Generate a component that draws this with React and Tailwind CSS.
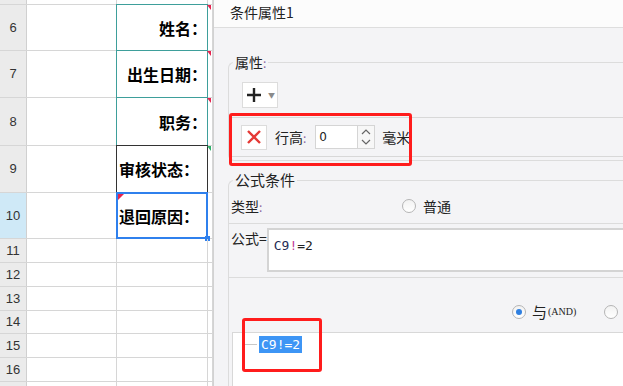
import React from 'react'

const rows = [
  { n: '', h: 'h-[5px]' },
  { n: '6', h: 'h-[46px]', label: '姓名：', align: 'right', frame: 'teal' },
  { n: '7', h: 'h-[47px]', label: '出生日期：', align: 'right', frame: 'teal' },
  { n: '8', h: 'h-[48px]', label: '职务：', align: 'right', frame: 'teal' },
  { n: '9', h: 'h-[47px]', label: '审核状态：', align: 'left', frame: 'black' },
  { n: '10', h: 'h-[46px]', label: '退回原因：', align: 'left', frame: 'blue' },
  { n: '11', h: 'h-[24px]' },
  { n: '12', h: 'h-[24px]' },
  { n: '13', h: 'h-[24px]' },
  { n: '14', h: 'h-[23px]' },
  { n: '15', h: 'h-[24px]' },
  { n: '16', h: 'h-[24px]' },
  { n: '', h: 'h-[10px]' },
]

const Radio = ({ checked }) => (
  <span className="w-[14px] h-[14px] rounded-full border border-[#b5b5b5] bg-gradient-to-b from-[#f2f2f2] to-white flex items-center justify-center shrink-0">
    {checked && <span className="w-[6px] h-[6px] rounded-full bg-[#2f7fe0]" />}
  </span>
)

const Colon = () => <span className="text-[#8a6aa3] text-[12px]">:</span>

const Sheet = () => (
  <div className="w-[213px] shrink-0 flex flex-col bg-white" style={{ fontFamily: '"Liberation Sans", "Noto Sans CJK SC", sans-serif' }}>
    {rows.map((r, i) => (
      <div key={i} className={`${r.h} shrink-0 flex border-b border-[#d6d6d6]`}>
        <div className={`w-[27px] border-r border-[#d0d0d0] flex items-center justify-center text-[13px] text-[#333] ${r.n === '10' ? 'bg-[#cfe9f7]' : 'bg-[#ebebeb]'}`}>
          {r.n}
        </div>
        <div className="w-[90px] border-r border-[#d6d6d6]" />
        <div className={`relative w-[91px] border-r border-[#d6d6d6] flex items-center whitespace-nowrap ${r.align === 'right' ? 'justify-end' : 'pl-[2px]'}`}>
          {r.label && (
            <span className="font-bold text-[16px] text-black" style={{ fontFamily: '"Noto Sans CJK SC", sans-serif' }}>{r.label}</span>
          )}
          {r.frame === 'teal' && (
            <>
              <div className="absolute -inset-px border border-[#3e9f9b]" />
              <div className="absolute -right-[4px] top-0 w-0 h-0 border-t-[5px] border-t-[#e6234f] border-l-[4px] border-l-transparent" />
            </>
          )}
          {r.frame === 'black' && (
            <>
              <div className="absolute -inset-px border border-[#333]" />
              <div className="absolute -right-[4px] top-0 w-0 h-0 border-t-[5px] border-t-[#2fae6a] border-l-[4px] border-l-transparent" />
            </>
          )}
          {r.frame === 'blue' && (
            <>
              <div className="absolute -inset-px border-2 border-[#2f80ed]" />
              <div className="absolute left-[1px] top-[1px] w-0 h-0 border-t-[6px] border-t-[#e6234f] border-r-[6px] border-r-transparent" />
              <div className="absolute -right-[3px] -bottom-[3px] w-[5px] h-[5px] bg-[#2f80ed]" />
            </>
          )}
        </div>
        <div className="w-[5px] border-r border-[#d6d6d6]" />
      </div>
    ))}
  </div>
)

const Panel = () => (
  <div className="flex-1 min-w-0 bg-[#f4f4f6] border-l border-[#d2d2d2] flex flex-col overflow-hidden text-[14px] text-[#222]" style={{ fontFamily: '"Noto Sans CJK SC", "Noto Sans", sans-serif' }}>
    <div className="h-[28px] shrink-0 bg-[#fcfcfc] border-b border-[#dedede] pl-[16px] pt-[2px] leading-[20px]">条件属性1</div>

    {/* 属性 */}
    <fieldset className="mt-[24px] ml-[14px] w-[420px] border border-r-0 border-[#dcdcdc] rounded-l-[6px] pb-[3px]">
      <legend className="ml-[4px] px-[2px] leading-[20px]">属性<Colon /></legend>
      <div className="mt-[9px] ml-[13px] w-[36px] h-[26px] bg-white border border-[#dcdcdc] flex items-center pl-[3px]">
        <svg width="16" height="16" viewBox="0 0 16 16">
          <path d="M8 1v14M1 8h14" stroke="#222" strokeWidth="2.4" />
        </svg>
        <span className="ml-[6px] text-[7px] text-[#8a8a8a]">▼</span>
      </div>
      <div className="mt-[9px] h-[40px] border-y border-[#d8d8d8] flex items-center pl-[12px]">
        <div className="w-[26px] h-[25px] bg-white border border-[#dcdcdc] flex items-center justify-center">
          <svg width="16" height="16" viewBox="0 0 16 16">
            <path d="M2 2l12 12M14 2L2 14" stroke="#e53935" strokeWidth="2.4" />
          </svg>
        </div>
        <span className="ml-[8px] leading-[20px]">行高<Colon /></span>
        <div className="ml-[9px] w-[43px] h-[24px] bg-white border border-[#d5d5d5] flex items-center pl-[3px] text-[12px]" style={{ fontFamily: '"DejaVu Sans", sans-serif' }}>0</div>
        <div className="w-[17px] h-[24px] bg-[#f7f7f7] border border-l-0 border-[#d5d5d5] flex flex-col items-center justify-center">
          <svg width="10" height="6" viewBox="0 0 10 6"><path d="M1 5l4-4 4 4" stroke="#666" fill="none" strokeWidth="1.2" /></svg>
          <svg width="10" height="6" viewBox="0 0 10 6" className="mt-[4px]"><path d="M1 1l4 4 4-4" stroke="#666" fill="none" strokeWidth="1.2" /></svg>
        </div>
        <span className="ml-[7px]">毫米</span>
      </div>
    </fieldset>

    {/* 公式条件 */}
    <fieldset className="mt-[10px] ml-[14px] w-[420px] border border-r-0 border-b-0 border-[#dcdcdc] rounded-tl-[6px] flex-1">
      <legend className="ml-[4px] px-[2px] text-[15px] leading-[18px]">公式条件</legend>
      <div className="h-[35px] border-b border-[#dcdcdc] flex items-center pl-[2px]">
        <span className="w-[171px]">类型<Colon /></span>
        <Radio />
        <span className="ml-[7px]">普通</span>
      </div>
      <div className="h-[54px] border-b border-[#dcdcdc] flex items-start pt-[4px] pl-[2px]">
        <span className="leading-[20px]">公式=</span>
        <div className="flex-1 h-[44px] bg-white border-2 border-[#d4d4d4] pl-[5px] pt-[8px] text-[13px] leading-[15px]" style={{ fontFamily: '"DejaVu Sans Mono", monospace' }}>
          <span className="text-[#1f2a55]">C9</span><span className="text-[#c0399a]">!</span>=2
        </div>
      </div>
      <div className="h-[54px] flex items-start pt-[27px] pl-[283px]">
        <Radio checked />
        <span className="ml-[6px] text-[15px] leading-[14px]">与</span>
        <span className="text-[10px] leading-[14px] ml-[1px]" style={{ fontFamily: '"Liberation Serif", serif' }}>(AND)</span>
        <span className="ml-[28px]"><Radio /></span>
      </div>
      <div className="ml-[3px] h-[60px] bg-white border-t border-l border-[#d8d8d8] flex items-start pt-[3px] pl-[12px]">
        <div className="mt-[8px] w-[12px] h-px bg-[#c8c8c8]" />
        <span className="ml-[2px] h-[17px] px-[2px] bg-[#3d95f5] text-white text-[13px] leading-[17px]" style={{ fontFamily: '"DejaVu Sans Mono", monospace' }}>C9!=2</span>
      </div>
    </fieldset>
  </div>
)

export default function App() {
  return (
    <div className="relative w-[623px] h-[386px] flex overflow-hidden bg-white">
      <Sheet />
      <Panel />
      <div className="absolute left-[229px] top-[113px] w-[183px] h-[53px] border-[3px] border-[#ff1c1c] rounded-[3px]" />
      <div className="absolute left-[242px] top-[318px] w-[80px] h-[54px] border-[3px] border-[#ff1c1c] rounded-[3px]" />
    </div>
  )
}
